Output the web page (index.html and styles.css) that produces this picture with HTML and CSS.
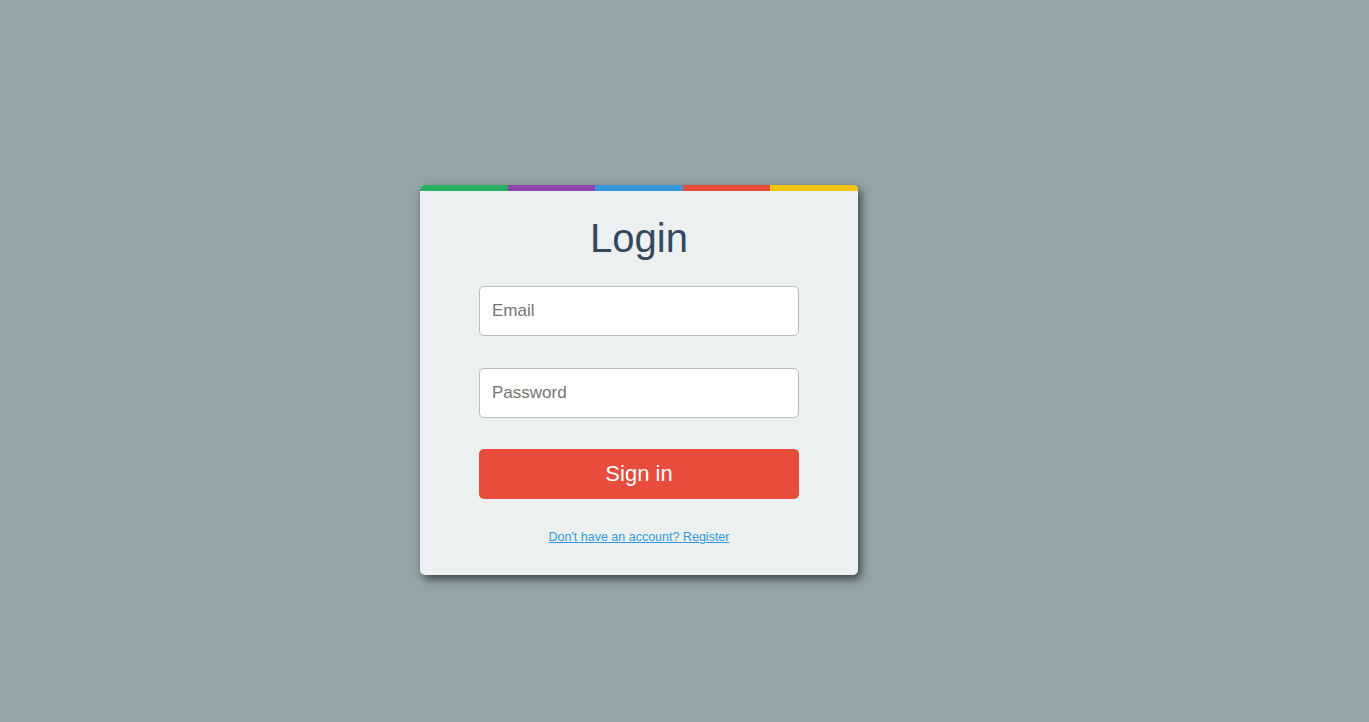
FILE: index.html
```html
<!DOCTYPE html>
<html lang="en">
<head>
<meta charset="utf-8">
<title>Login</title>
<link rel="stylesheet" href="styles.css">
</head>
<body>
  <div class="login-card">
    <div class="stripe">
      <span class="stripe-green"></span>
      <span class="stripe-purple"></span>
      <span class="stripe-blue"></span>
      <span class="stripe-red"></span>
      <span class="stripe-yellow"></span>
    </div>
    <form class="login-form">
      <h1 class="title">Login</h1>
      <input class="field field-email" type="email" placeholder="Email">
      <input class="field field-password" type="password" placeholder="Password">
      <button class="submit" type="button">Sign in</button>
      <a class="register" href="#">Don't have an account? Register</a>
    </form>
  </div>
</body>
</html>
```

FILE: styles.css
```css
html, body {
  margin: 0;
  padding: 0;
  height: 100%;
}

body {
  background: #95a5a6;
  font-family: "Liberation Sans", Arial, sans-serif;
  padding: 185px 0 0 420px;
  box-sizing: border-box;
}

.login-card {
  width: 438px;
  height: 390px;
  background: #ecf0f1;
  border-radius: 5px;
  overflow: hidden;
  box-shadow: 3px 4px 10px rgba(0, 0, 0, 0.6);
}

.stripe {
  display: flex;
  height: 6px;
}

.stripe span {
  flex: 1;
}

.stripe-green { background: #27ae60; }
.stripe-purple { background: #8e44ad; }
.stripe-blue { background: #3498db; }
.stripe-red { background: #e74c3c; }
.stripe-yellow { background: #f1c40f; }

.login-form {
  display: flex;
  flex-direction: column;
  align-items: center;
  padding-top: 24px;
}

.title {
  margin: 0 0 25px;
  font-size: 40px;
  line-height: 46px;
  font-weight: normal;
  color: #34495e;
}

.field {
  box-sizing: border-box;
  width: 320px;
  height: 50px;
  margin: 0 0 32px;
  padding: 0 12px;
  border: 1px solid #bdbdbd;
  border-radius: 5px;
  background: #fff;
  font-family: inherit;
  font-size: 17px;
  color: #333;
  outline: none;
}

.field-password {
  margin-bottom: 31px;
}

.field::placeholder {
  color: #757575;
}

.submit {
  width: 320px;
  height: 50px;
  border: none;
  border-radius: 5px;
  background: #e74c3c;
  color: #fff;
  font-family: inherit;
  font-size: 22px;
  cursor: pointer;
}

.register {
  margin-top: 31px;
  font-size: 12.5px;
  line-height: 15px;
  color: #3498db;
  text-decoration: underline;
}
```
